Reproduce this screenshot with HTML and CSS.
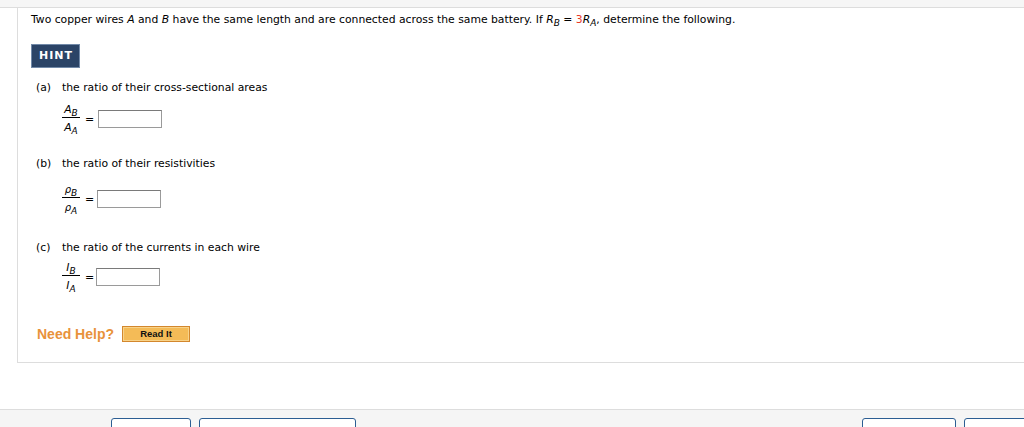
FILE: index.html
```html
<!DOCTYPE html>
<html>
<head>
<meta charset="utf-8">
<link rel="stylesheet" href="styles.css">
</head>
<body>
<div class="topbar"></div>
<div class="card">
  <p class="intro">Two copper wires <i>A</i> and <i>B</i> have the same length and are connected across the same battery. If <i>R</i><sub><i>B</i></sub> = <span class="red">3</span><i>R</i><sub><i>A</i></sub>, determine the following.</p>
  <div class="hint-row"><span class="hint">HINT</span></div>

  <div class="part part-a">
    <div class="label"><span class="letter">(a)</span>the ratio of their cross-sectional areas</div>
    <div class="eq">
      <span class="frac">
        <span class="num"><i>A</i><sub><i>B</i></sub></span>
        <span class="den"><i>A</i><sub><i>A</i></sub></span>
      </span>
      <span class="equals">=</span>
      <span class="answer"></span>
    </div>
  </div>

  <div class="part part-b">
    <div class="label"><span class="letter">(b)</span>the ratio of their resistivities</div>
    <div class="eq">
      <span class="frac">
        <span class="num rho"><i>ρ</i><sub><i>B</i></sub></span>
        <span class="den rho"><i>ρ</i><sub><i>A</i></sub></span>
      </span>
      <span class="equals">=</span>
      <span class="answer"></span>
    </div>
  </div>

  <div class="part part-c">
    <div class="label"><span class="letter">(c)</span>the ratio of the currents in each wire</div>
    <div class="eq">
      <span class="frac">
        <span class="num"><i>I</i><sub><i>B</i></sub></span>
        <span class="den"><i>I</i><sub><i>A</i></sub></span>
      </span>
      <span class="equals">=</span>
      <span class="answer"></span>
    </div>
  </div>

  <div class="help">
    <span class="help-text">Need Help?</span>
    <span class="read-it">Read It</span>
  </div>
</div>

<div class="footer">
  <div class="btn-group left">
    <span class="btn w1"></span>
    <span class="btn w2"></span>
  </div>
  <div class="btn-group right">
    <span class="btn w3"></span>
    <span class="btn w4"></span>
  </div>
</div>
</body>
</html>
```

FILE: styles.css
```css
html, body {
  margin: 0;
  padding: 0;
  background: #ffffff;
}

body {
  font-family: "DejaVu Sans", Verdana, sans-serif;
  font-size: 10.8px;
  color: #000;
  overflow: hidden;
  height: 427px;
}

.topbar {
  height: 7px;
  background: #f6f6f6;
  border-bottom: 1px solid #dddddd;
}

.card {
  margin-left: 17px;
  border-left: 1px solid #dddddd;
  border-bottom: 1px solid #dddddd;
  padding: 5px 0 20px 13px;
  margin-bottom: 46px;
}

.intro {
  margin: 0;
  line-height: 14px;
  white-space: nowrap;
}

sub {
  font-size: 9px;
  vertical-align: -3px;
  line-height: 0;
}

.red {
  color: #e8392a;
}

.hint-row {
  margin-top: 17px;
  display: flex;
}

.hint {
  display: inline-block;
  height: 22px;
  line-height: 22px;
  padding: 0 6px 0 7px;
  background: #2b4467;
  border: 1px solid #7189a8;
  color: #ffffff;
  font-weight: bold;
  font-size: 11px;
  letter-spacing: 1px;
}

.part-a { margin-top: 13px; }
.part-b { margin-top: 22px; }
.part-c { margin-top: 26px; }

.label {
  line-height: 14px;
  display: flex;
  padding-left: 5px;
}

.letter {
  width: 26px;
}

.eq {
  display: flex;
  align-items: center;
  margin-left: 31px;
}

.part-a .eq { margin-top: 8px; }
.part-b .eq { margin-top: 12px; }
.part-c .eq { margin-top: 6px; }

.frac {
  display: inline-flex;
  flex-direction: column;
  align-items: center;
  width: 18px;
}

.num {
  line-height: 14px;
  border-bottom: 1px solid #000;
  width: 100%;
  text-align: center;
}

.den {
  line-height: 14px;
  padding-top: 3px;
  text-align: center;
}

.rho {
  font-size: 10px;
}

.equals {
  margin-left: 5px;
  margin-right: 4px;
  font-size: 11px;
}

.answer {
  display: inline-block;
  width: 62px;
  height: 16px;
  border: 1px solid #9a9a9a;
  border-top-color: #7a7a7a;
  background: #fff;
}

.part-b .answer { margin-left: -1px; }
.part-c .answer { margin-left: -2px; }

.help {
  margin-top: 33px;
  display: flex;
  align-items: center;
  padding-left: 6px;
  height: 16px;
}

.help-text {
  font-family: "Liberation Sans", Arial, sans-serif;
  font-weight: bold;
  font-size: 14px;
  color: #e8923b;
}

.read-it {
  margin-left: 8px;
  width: 66px;
  height: 14px;
  box-sizing: content-box;
  border: 1px solid #d3872d;
  box-shadow: inset 0 0 0 1px #f8d38a;
  background: #f4bb57;
  font-family: "Liberation Sans", Arial, sans-serif;
  font-weight: bold;
  font-size: 9.5px;
  line-height: 14px;
  text-align: center;
  color: #111;
}

.footer {
  border-top: 1px solid #dddddd;
  background: #f5f5f5;
  height: 9px;
  padding-top: 8px;
  display: flex;
  overflow: hidden;
}

.btn-group {
  display: flex;
  gap: 8px;
  flex-shrink: 0;
}

.btn-group.left {
  margin-left: 111px;
}

.btn-group.right {
  margin-left: 506px;
}

.btn {
  display: block;
  height: 30px;
  border: 1px solid #2c5e93;
  border-radius: 3px;
  background: #ffffff;
  flex-shrink: 0;
}

.w1 { width: 78px; }
.w2 { width: 155px; }
.w3 { width: 92px; }
.w4 { width: 92px; }
```
